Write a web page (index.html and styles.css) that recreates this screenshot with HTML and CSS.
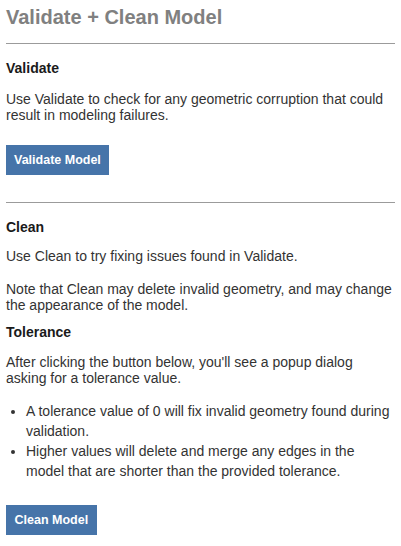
FILE: index.html
```html
<!DOCTYPE html>
<html>
<head>
<meta charset="utf-8">
<link rel="stylesheet" href="styles.css">
</head>
<body>
<div class="panel">
  <h1 class="title">Validate + Clean Model</h1>
  <hr class="rule rule-top">
  <h3 class="sub sub-first">Validate</h3>
  <p class="text text-lead">Use Validate to check for any geometric corruption that could result in modeling failures.</p>
  <button class="btn btn-validate">Validate Model</button>
  <hr class="rule rule-mid">
  <h3 class="sub sub-first">Clean</h3>
  <p class="text text-lead-tight">Use Clean to try fixing issues found in Validate.</p>
  <p class="text text-next">Note that Clean may delete invalid geometry, and may change the appearance of the model.</p>
  <h3 class="sub sub-next">Tolerance</h3>
  <p class="text text-lead-mid">After clicking the button below, you'll see a popup dialog asking for a tolerance value.</p>
  <ul class="list">
    <li>A tolerance value of 0 will fix invalid geometry found during validation.</li>
    <li>Higher values will delete and merge any edges in the model that are shorter than the provided tolerance.</li>
  </ul>
  <button class="btn btn-clean">Clean Model</button>
</div>
</body>
</html>
```
FILE: styles.css
```css
html, body {
  margin: 0;
  padding: 0;
  background: #ffffff;
}
.panel {
  padding: 5px 6px 0 6px;
  font-family: "Liberation Sans", Arial, sans-serif;
  font-size: 14px;
  line-height: 16px;
  color: #333333;
  display: flex;
  flex-direction: column;
  align-items: flex-start;
}
.title {
  margin: 0;
  font-size: 20px;
  line-height: 24px;
  font-weight: bold;
  color: #808080;
}
.rule {
  align-self: stretch;
  border: 0;
  border-top: 1px solid #9b9b9b;
  height: 0;
  margin: 0;
}
.rule-top { margin-top: 14px; }
.rule-mid { margin-top: 27px; }
.sub {
  margin: 0;
  font-size: 14px;
  line-height: 16px;
  font-weight: bold;
  color: #1a1a1a;
}
.sub-first { margin-top: 16px; }
.sub-next { margin-top: 11px; }
.text {
  margin: 0;
}
.text-lead { margin-top: 15px; }
.text-lead-tight { margin-top: 13px; }
.text-lead-mid { margin-top: 14px; }
.text-next { margin-top: 17px; }
.list {
  margin: 15px 0 0 0;
  padding-left: 20px;
  line-height: 20px;
}
.btn {
  border: 0;
  margin: 0;
  height: 30px;
  padding: 0 8px;
  background: #4674a9;
  color: #ffffff;
  font-family: "Liberation Sans", Arial, sans-serif;
  font-size: 12.5px;
  font-weight: bold;
  cursor: pointer;
}
.btn-validate { margin-top: 22px; }
.btn-clean { margin-top: 24px; padding: 0 8.5px; }
```
